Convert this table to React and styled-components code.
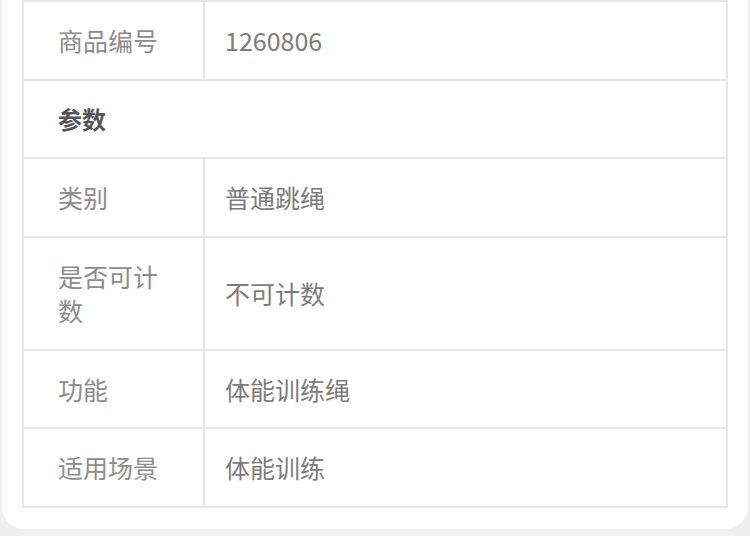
import React from 'react'
import styled, { createGlobalStyle } from 'styled-components'

const GlobalStyle = createGlobalStyle`
  html, body {
    margin: 0;
    padding: 0;
    background: #efefef;
  }
  body {
    font-family: "Noto Sans CJK SC", "Noto Sans", sans-serif;
  }
`

const Card = styled.div`
  background: #ffffff;
  margin: 0 2px;
  padding: 0 20px 21px 20px;
  border-radius: 0 0 22px 22px;
`

const SpecTable = styled.table`
  width: 100%;
  border-collapse: collapse;
  table-layout: fixed;
  border: 2px solid #e6e6e6;
`

const Label = styled.td`
  width: 181px;
  box-sizing: border-box;
  padding: 21px 38px 21px 34px;
  border: 2px solid #e6e6e6;
  font-size: 25px;
  line-height: 34.5px;
  color: #8c8c8c;
  vertical-align: middle;
  word-break: break-all;
`

const Value = styled.td`
  padding: 21px 20px;
  border: 2px solid #e6e6e6;
  font-size: 25px;
  line-height: 34.5px;
  color: #7c7c7c;
  vertical-align: middle;
`

const Section = styled.td`
  padding: 21px 34px;
  border: 2px solid #e6e6e6;
  font-size: 24px;
  line-height: 34.5px;
  font-weight: 700;
  color: #555555;
`

const rows = [
  { label: '类别', value: '普通跳绳' },
  { label: '是否可计数', value: '不可计数' },
  { label: '功能', value: '体能训练绳' },
  { label: '适用场景', value: '体能训练' },
]

export default function App() {
  return (
    <>
      <GlobalStyle />
      <Card>
        <SpecTable>
          <tbody>
            <tr>
              <Label>商品编号</Label>
              <Value>1260806</Value>
            </tr>
            <tr>
              <Section colSpan={2}>参数</Section>
            </tr>
            {rows.map(r => (
              <tr key={r.label}>
                <Label>{r.label}</Label>
                <Value>{r.value}</Value>
              </tr>
            ))}
          </tbody>
        </SpecTable>
      </Card>
    </>
  )
}
